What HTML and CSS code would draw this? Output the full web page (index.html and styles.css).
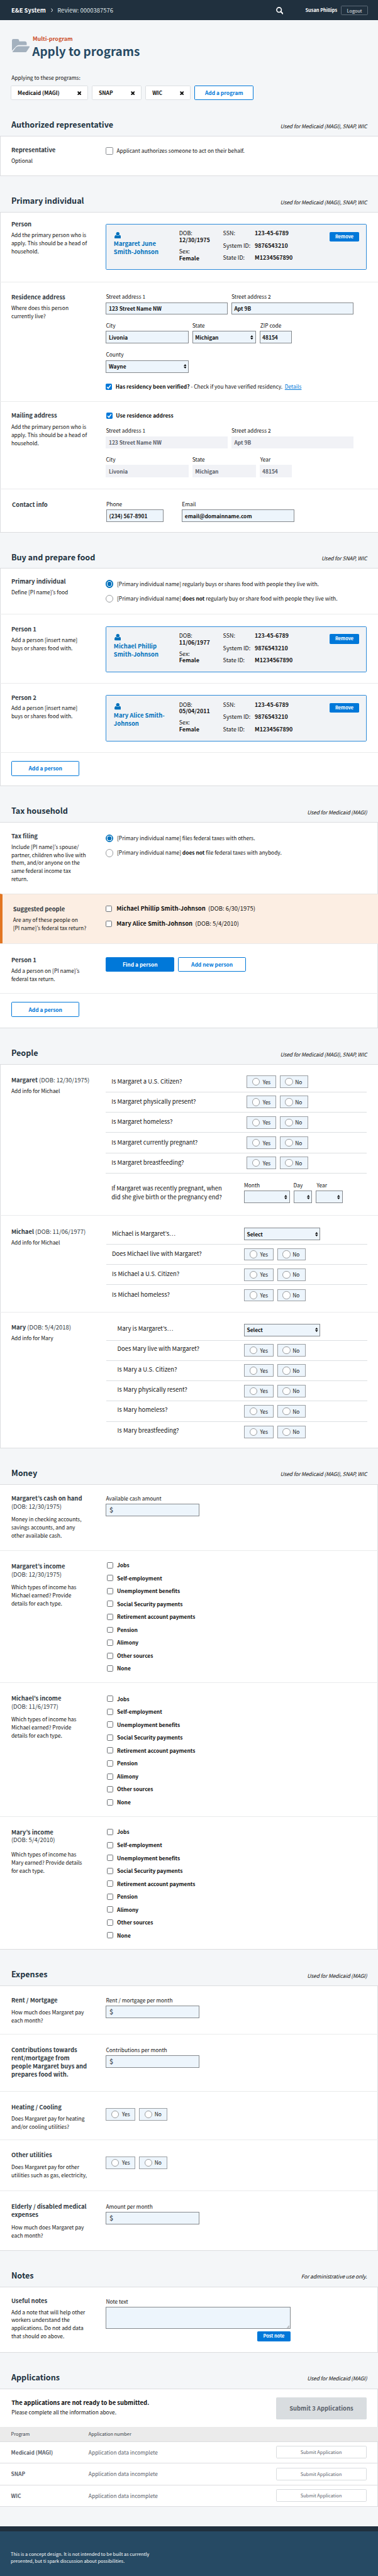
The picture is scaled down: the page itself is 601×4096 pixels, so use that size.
FILE: index.html
```html
<!DOCTYPE html>
<html lang="en">
<head>
<meta charset="utf-8">
<title>Apply to programs</title>
<link rel="stylesheet" href="styles.css">
</head>
<body>
<svg width="0" height="0" class="defs">
  <symbol id="user" viewBox="0 0 18 18"><ellipse cx="9" cy="4.6" rx="4.6" ry="4.6"/><path d="M4 8.2Q9 12.6 14 8.2Q18 9 18 15Q18 18 14.6 18H3.4Q0 18 0 15Q0 9 4 8.2Z"/></symbol>
  <symbol id="sort" viewBox="0 0 8 12"><path d="M4 0L8 5H0ZM4 12L0 7H8Z"/></symbol>
  <symbol id="times" viewBox="0 0 11 11"><path d="M2 0L5.5 3L9 0L11 2L8 5.5L11 9L9 11L5.5 8L2 11L0 9L3 5.5L0 2Z"/></symbol>
  <symbol id="tick" viewBox="0 0 17 17"><path d="M3.5 9L7 12.8L13.5 4.2" fill="none" stroke="#fff" stroke-width="2.6"/></symbol>
</svg>

<header class="topbar">
  <b class="brand">E&amp;E System</b>
  <svg class="chev" viewBox="0 0 6 11"><path d="M1 1L4.6 5.5L1 10" fill="none" stroke="#fff" stroke-width="1.7"/></svg>
  <span class="crumb">Review: 0000387576</span>
  <svg class="search" viewBox="0 0 20 20"><circle cx="8" cy="8" r="6.4" fill="none" stroke="#fff" stroke-width="2.8"/><path d="M12.5 12.5L18.2 18.2" stroke="#fff" stroke-width="3.4" stroke-linecap="round"/></svg>
  <b class="who">Susan Phillips</b>
  <span class="logout">Logout</span>
</header>

<div class="intro">
  <div class="title">
    <svg class="folder" viewBox="0 0 48 37"><path d="M0 32V4Q0 0 4 0H14.500Q19 0 19.500 4V6.500H35Q40 7 40 11.500V16.500H18Q13.500 17 11 20.500Z"/><path d="M17.500 19.500H46.500Q49 20 47.300 22.800L40 33.500Q37.500 37 33.500 37H3Q0.600 36.400 2.300 33.700L10.500 23Q13.500 19.700 17.500 19.500Z"/></svg>
    <div>
      <div class="kicker">Multi-program</div>
      <h1>Apply to programs</h1>
    </div>
  </div>
  <p class="applying">Applying to these programs:</p>
  <div class="chips">
    <div class="chip chip--a"><b>Medicaid (MAGI)</b><svg><use href="#times"/></svg></div>
    <div class="chip chip--b"><b>SNAP</b><svg><use href="#times"/></svg></div>
    <div class="chip chip--c"><b>WIC</b><svg><use href="#times"/></svg></div>
    <div class="btn btn--program">Add a program</div>
  </div>
</div>

<div class="head"><h2>Authorized representative</h2><i>Used for Medicaid (MAGI), SNAP, WIC</i></div>
<section class="panel">
  <div class="row r-rep">
    <div class="side"><h3>Representative</h3><p>Optional</p></div>
    <div class="main"><div class="opt"><span class="box box--lg"></span>Applicant authorizes someone to act on their behalf.</div></div>
  </div>
</section>

<div class="head"><h2>Primary individual</h2><i>Used for Medicaid (MAGI), SNAP, WIC</i></div>
<section class="panel">
  <div class="row r-person">
    <div class="side"><h3>Person</h3><p>Add the primary person who is<br>apply. This should be a head of<br>household.</p></div>
    <div class="main">
      <div class="card">
        <div class="name"><svg><use href="#user"/></svg><b>Margaret June<br>Smith-Johnson</b></div>
        <dl class="dob"><div><dt>DOB:</dt><dd>12/30/1975</dd></div><div><dt>Sex:</dt><dd>Female</dd></div></dl>
        <dl class="ids"><dt>SSN:</dt><dd>123-45-6789</dd><dt>System ID:</dt><dd>9876543210</dd><dt>State ID:</dt><dd>M1234567890</dd></dl>
        <span class="small-btn">Remove</span>
      </div>
    </div>
  </div>
  <div class="row r-res">
    <div class="side"><h3>Residence address</h3><p>Where does this person<br>currently live?</p></div>
    <div class="main">
      <div class="fields">
        <label class="w330">Street address 1<span class="in">123 Street Name NW</span></label>
        <label class="w330">Street address 2<span class="in">Apt 9B</span></label>
      </div>
      <div class="fields">
        <label class="w224">City<span class="in">Livonia</span></label>
        <label class="w172">State<span class="in">Michigan<svg><use href="#sort"/></svg></span></label>
        <label class="w88"><em>ZIP code</em><span class="in">48154</span></label>
      </div>
      <div class="fields fields--county">
        <label class="w224">County<span class="in">Wayne<svg><use href="#sort"/></svg></span></label>
      </div>
      <div class="opt opt--verify"><span class="box box--on"><svg><use href="#tick"/></svg></span><b>Has residency been verified?</b>&nbsp;- Check if you have verified residency. <u>Details</u></div>
    </div>
  </div>
  <div class="row r-mail">
    <div class="side"><h3>Mailing address</h3><p>Add the primary person who is<br>apply. This should be a head of<br>household.</p></div>
    <div class="main">
      <div class="opt opt--use"><span class="box box--on"><svg><use href="#tick"/></svg></span><b>Use residence address</b></div>
      <div class="fields">
        <label class="w330">Street address 1<span class="in in--off">123 Street Name NW</span></label>
        <label class="w330">Street address 2<span class="in in--off">Apt 9B</span></label>
      </div>
      <div class="fields">
        <label class="w224">City<span class="in in--off">Livonia</span></label>
        <label class="w172">State<span class="in in--off">Michigan</span></label>
        <label class="w88"><em>Year</em><span class="in in--off">48154</span></label>
      </div>
    </div>
  </div>
  <div class="row r-contact">
    <div class="side"><h3>Contact info</h3></div>
    <div class="main">
      <div class="fields fields--contact">
        <label class="w155">Phone<span class="in">(234) 567-8901</span></label>
        <label class="w304">Email<span class="in">email@domainname.com</span></label>
      </div>
    </div>
  </div>
</section>

<div class="head"><h2>Buy and prepare food</h2><i>Used for SNAP, WIC</i></div>
<section class="panel">
  <div class="row r-food">
    <div class="side"><h3>Primary individual</h3><p>Define [PI name]’s food</p></div>
    <div class="main">
      <div class="opt"><span class="radio radio--on"></span>[Primary individual name] regularly buys or shares food with people they live with.</div>
      <div class="opt"><span class="radio"></span><span>[Primary individual name] <b>does not</b> regularly buy or share food with people they live with.</span></div>
    </div>
  </div>
  <div class="row r-p1">
    <div class="side"><h3>Person 1</h3><p>Add a person [insert name]<br>buys or shares food with.</p></div>
    <div class="main">
      <div class="card">
        <div class="name"><svg><use href="#user"/></svg><b>Michael Phillip<br>Smith-Johnson</b></div>
        <dl class="dob"><div><dt>DOB:</dt><dd>11/06/1977</dd></div><div><dt>Sex:</dt><dd>Female</dd></div></dl>
        <dl class="ids"><dt>SSN:</dt><dd>123-45-6789</dd><dt>System ID:</dt><dd>9876543210</dd><dt>State ID:</dt><dd>M1234567890</dd></dl>
        <span class="small-btn">Remove</span>
      </div>
    </div>
  </div>
  <div class="row r-p2">
    <div class="side"><h3>Person 2</h3><p>Add a person [insert name]<br>buys or shares food with.</p></div>
    <div class="main">
      <div class="card">
        <div class="name"><svg><use href="#user"/></svg><b>Mary Alice Smith-<br>Johnson</b></div>
        <dl class="dob"><div><dt>DOB:</dt><dd>05/04/2011</dd></div><div><dt>Sex:</dt><dd>Female</dd></div></dl>
        <dl class="ids"><dt>SSN:</dt><dd>123-45-6789</dd><dt>System ID:</dt><dd>9876543210</dd><dt>State ID:</dt><dd>M1234567890</dd></dl>
        <span class="small-btn">Remove</span>
      </div>
    </div>
  </div>
  <div class="row r-add"><div class="btn">Add a person</div></div>
</section>

<div class="head"><h2>Tax household</h2><i>Used for Medicaid (MAGI)</i></div>
<section class="panel panel--right">
  <div class="row r-tax">
    <div class="side"><h3>Tax filing</h3><p>Include [PI name]’s spouse/<br>partner, children who live with<br>them, and/or anyone on the<br>same federal income tax<br>return.</p></div>
    <div class="main">
      <div class="opt"><span class="radio radio--on"></span>[Primary individual name] files federal taxes with others.</div>
      <div class="opt"><span class="radio"></span><span>[Primary individual name] <b>does not</b> file federal taxes with anybody.</span></div>
    </div>
  </div>
  <div class="row r-alert">
    <div class="side"><h3>Suggested people</h3><p>Are any of these people on<br>[PI name]’s federal tax return?</p></div>
    <div class="main">
      <div class="opt"><span class="box"></span><b>Michael Phillip Smith-Johnson</b>&nbsp; (DOB: 6/30/1975)</div>
      <div class="opt"><span class="box"></span><b>Mary Alice Smith-Johnson</b>&nbsp; (DOB: 5/4/2010)</div>
    </div>
  </div>
  <div class="row r-find">
    <div class="side"><h3>Person 1</h3><p>Add a person on [PI name]’s<br>federal tax return.</p></div>
    <div class="main pair"><div class="btn btn--fill">Find a person</div><div class="btn">Add new person</div></div>
  </div>
  <div class="row r-add r-add--tax"><div class="btn">Add a person</div></div>
</section>

<div class="head"><h2>People</h2><i>Used for Medicaid (MAGI), SNAP, WIC</i></div>
<section class="panel">
  <div class="row r-margaret">
    <div class="side"><h3>Margaret <span>(DOB: 12/30/1975)</span></h3><p>Add info for Michael</p></div>
    <div class="main">
      <div class="q"><span>Is Margaret a U.S. Citizen?</span><div class="yn"><span><i></i>Yes</span><span><i></i>No</span></div></div>
      <div class="q"><span>Is Margaret physically present?</span><div class="yn"><span><i></i>Yes</span><span><i></i>No</span></div></div>
      <div class="q"><span>Is Margaret homeless?</span><div class="yn"><span><i></i>Yes</span><span><i></i>No</span></div></div>
      <div class="q"><span>Is Margaret currently pregnant?</span><div class="yn"><span><i></i>Yes</span><span><i></i>No</span></div></div>
      <div class="q"><span>Is Margaret breastfeeding?</span><div class="yn"><span><i></i>Yes</span><span><i></i>No</span></div></div>
      <div class="birth">
        <span>If Margaret was recently pregnant, when<br>did she give birth or the pregnancy end?</span>
        <div class="fields">
          <label class="w124">Month<span class="in"><svg><use href="#sort"/></svg></span></label>
          <label class="w51">Day<span class="in"><svg><use href="#sort"/></svg></span></label>
          <label class="w72"><em>Year</em><span class="in"><svg><use href="#sort"/></svg></span></label>
        </div>
      </div>
    </div>
  </div>
  <div class="row r-michael">
    <div class="side"><h3>Michael <span>(DOB: 11/06/1977)</span></h3><p>Add info for Michael</p></div>
    <div class="main">
      <div class="q"><span>Michael is Margaret’s…</span><span class="in in--select">Select<svg><use href="#sort"/></svg></span></div>
      <div class="q"><span>Does Michael live with Margaret?</span><div class="yn"><span><i></i>Yes</span><span><i></i>No</span></div></div>
      <div class="q"><span>Is Michael a U.S. Citizen?</span><div class="yn"><span><i></i>Yes</span><span><i></i>No</span></div></div>
      <div class="q q--last"><span>Is Michael homeless?</span><div class="yn"><span><i></i>Yes</span><span><i></i>No</span></div></div>
    </div>
  </div>
  <div class="row r-mary">
    <div class="side"><h3>Mary <span>(DOB: 5/4/2018)</span></h3><p>Add info for Mary</p></div>
    <div class="main">
      <div class="q"><span>Mary is Margaret’s…</span><span class="in in--select">Select<svg><use href="#sort"/></svg></span></div>
      <div class="q"><span>Does Mary live with Margaret?</span><div class="yn"><span><i></i>Yes</span><span><i></i>No</span></div></div>
      <div class="q"><span>Is Mary a U.S. Citizen?</span><div class="yn"><span><i></i>Yes</span><span><i></i>No</span></div></div>
      <div class="q"><span>Is Mary physically resent?</span><div class="yn"><span><i></i>Yes</span><span><i></i>No</span></div></div>
      <div class="q"><span>Is Mary homeless?</span><div class="yn"><span><i></i>Yes</span><span><i></i>No</span></div></div>
      <div class="q q--last"><span>Is Mary breastfeeding?</span><div class="yn"><span><i></i>Yes</span><span><i></i>No</span></div></div>
    </div>
  </div>
</section>

<div class="head"><h2>Money</h2><i>Used for Medicaid (MAGI), SNAP, WIC</i></div>
<section class="panel panel--right">
  <div class="row r-cash">
    <div class="side"><h3>Margaret’s cash on hand<br><span>(DOB: 12/30/1975)</span></h3><p>Money in checking accounts,<br>savings accounts, and any<br>other available cash.</p></div>
    <div class="main"><label class="w253">Available cash amount<span class="in in--usd">$</span></label></div>
  </div>
  <div class="row r-inc1">
    <div class="side"><h3>Margaret’s income<br><span>(DOB: 12/30/1975)</span></h3><p>Which types of income has<br>Michael earned? Provide<br>details for each type.</p></div>
    <div class="main list">
      <b><span class="box"></span>Jobs</b><b><span class="box"></span>Self-employment</b><b><span class="box"></span>Unemployment benefits</b><b><span class="box"></span>Social Security payments</b><b><span class="box"></span>Retirement account payments</b><b><span class="box"></span>Pension</b><b><span class="box"></span>Alimony</b><b><span class="box"></span>Other sources</b><b><span class="box"></span>None</b>
    </div>
  </div>
  <div class="row r-inc2">
    <div class="side"><h3>Michael’s income<br><span>(DOB: 11/6/1977)</span></h3><p>Which types of income has<br>Michael earned? Provide<br>details for each type.</p></div>
    <div class="main list">
      <b><span class="box"></span>Jobs</b><b><span class="box"></span>Self-employment</b><b><span class="box"></span>Unemployment benefits</b><b><span class="box"></span>Social Security payments</b><b><span class="box"></span>Retirement account payments</b><b><span class="box"></span>Pension</b><b><span class="box"></span>Alimony</b><b><span class="box"></span>Other sources</b><b><span class="box"></span>None</b>
    </div>
  </div>
  <div class="row r-inc3">
    <div class="side"><h3>Mary’s income<br><span>(DOB: 5/4/2010)</span></h3><p>Which types of income has<br>Mary earned? Provide details<br>for each type.</p></div>
    <div class="main list">
      <b><span class="box"></span>Jobs</b><b><span class="box"></span>Self-employment</b><b><span class="box"></span>Unemployment benefits</b><b><span class="box"></span>Social Security payments</b><b><span class="box"></span>Retirement account payments</b><b><span class="box"></span>Pension</b><b><span class="box"></span>Alimony</b><b><span class="box"></span>Other sources</b><b><span class="box"></span>None</b>
    </div>
  </div>
</section>

<div class="head"><h2>Expenses</h2><i>Used for Medicaid (MAGI)</i></div>
<section class="panel panel--right">
  <div class="row r-rent">
    <div class="side"><h3>Rent / Mortgage</h3><p>How much does Margaret pay<br>each month?</p></div>
    <div class="main"><label class="w253">Rent / mortgage per month<span class="in in--usd">$</span></label></div>
  </div>
  <div class="row r-contrib">
    <div class="side"><h3>Contributions towards<br>rent/mortgage from<br>people Margaret buys and<br>prepares food with.</h3></div>
    <div class="main"><label class="w253">Contributions per month<span class="in in--usd">$</span></label></div>
  </div>
  <div class="row r-heat">
    <div class="side"><h3>Heating / Cooling</h3><p>Does Margaret pay for heating<br>and/or cooling utilities?</p></div>
    <div class="main"><div class="yn"><span><i></i>Yes</span><span><i></i>No</span></div></div>
  </div>
  <div class="row r-util">
    <div class="side"><h3>Other utilities</h3><p>Does Margaret pay for other<br>utilities such as gas, electricity,</p></div>
    <div class="main"><div class="yn"><span><i></i>Yes</span><span><i></i>No</span></div></div>
  </div>
  <div class="row r-elder">
    <div class="side"><h3>Elderly / disabled medical<br>expenses</h3><p>How much does Margaret pay<br>each month?</p></div>
    <div class="main"><label class="w253">Amount per month<span class="in in--usd">$</span></label></div>
  </div>
</section>

<div class="head"><h2>Notes</h2><i>For administrative use only.</i></div>
<section class="panel panel--right">
  <div class="row r-notes">
    <div class="side"><h3>Useful notes</h3><p>Add a note that will help other<br>workers understand the<br>applications. Do not add data<br>that should go above.</p></div>
    <div class="main">
      <div class="note">Note text<div class="area"><svg viewBox="0 0 8 8"><path d="M0 8L8 0M2.500 8L8 2.500M5 8L8 5" stroke="#777" stroke-width="1" fill="none"/></svg></div><span class="small-btn small-btn--post">Post note</span></div>
    </div>
  </div>
</section>

<div class="head"><h2>Applications</h2><i>Used for Medicaid (MAGI)</i></div>
<section class="panel panel--right">
  <div class="submit">
    <div><b>The applications are not ready to be submitted.</b><p>Please complete all the information above.</p></div>
    <span class="submit-btn">Submit 3 Applications</span>
  </div>
  <div class="t t--head"><span>Program</span><span>Application number</span></div>
  <div class="t"><b>Medicaid (MAGI)</b><span>Application data incomplete</span><span class="ghost">Submit Application</span></div>
  <div class="t"><b>SNAP</b><span>Application data incomplete</span><span class="ghost">Submit Application</span></div>
  <div class="t"><b>WIC</b><span>Application data incomplete</span><span class="ghost">Submit Application</span></div>
</section>

<footer>This is a concept design. It is not intended to be built as currently<br>presented, but ti spark discussion about possibilities.</footer>
</body>
</html>
```
FILE: styles.css
```css
/* 1rem = 100 design pixels of a 1024-wide layout */
html { font-size: 58.6914px; background: #f4f6f8; }
* { box-sizing: border-box; }
body { margin: 0; font: .1432rem/.22rem "Noto Sans CJK KR", "Noto Sans", sans-serif; color: #111; overflow-x: hidden; }
h1, h2, h3, p, dl, dd { margin: 0; }
b, h3, dd { font-weight: 700; }
svg { display: block; fill: currentColor; }
.defs { position: absolute; }
em { font-style: normal; padding-left: .02rem; }

.topbar { height: .55rem; background: #20303e; color: #fff; display: flex; align-items: center; padding: 0 .27rem 0 .305rem; font-size: .1611rem; }
.chev { width: .06rem; height: .11rem; margin: .02rem .12rem 0 .135rem; }
.crumb { color: #dfe3e6; }
.search { width: .2rem; height: .2rem; margin: .035rem .6rem 0 auto; }
.who, .logout { font-size: .1253rem; margin-top: .02rem; }
.logout { width: .735rem; height: .26rem; line-height: .24rem; margin-left: .1rem; border: 1px solid #5d6b78; border-radius: .03rem; text-align: center; color: #e6e9eb; }

.intro { height: 2.165rem; padding: .4rem .29rem 0; }
.title { display: flex; }
.folder { width: .48rem; height: .37rem; margin: .1rem .075rem 0 .03rem; color: #a4b1be; }
.kicker { color: #cd4f2b; font-size: .1522rem; font-weight: 700; line-height: .22rem; margin-left: .01rem; }
h1 { color: #264a64; font-size: .3223rem; line-height: .4rem; }
.applying { margin: .42rem 0 .1rem .02rem; }
.chips { display: flex; gap: .1rem; }
.chip { height: .4rem; padding: 0 .17rem; display: flex; align-items: center; justify-content: space-between; background: #fff; border: 1px solid #dcdfe2; border-radius: .03rem; }
.chip svg { width: .11rem; height: .11rem; margin-top: .02rem; }
.chip--a { width: 2.1rem; } .chip--b { width: 1.35rem; } .chip--c { width: 1.23rem; }
.btn { width: 1.85rem; height: .405rem; display: flex; align-items: center; justify-content: center; background: #fff; border: 1px solid #0078d9; border-radius: .03rem; color: #0078d9; font-weight: 700; }
.btn--fill { background: #0078d9; color: #fff; }
.btn--program { width: 1.6rem; height: .4rem; }

.head { height: .97rem; padding: 0 .3rem .157rem .305rem; display: flex; justify-content: space-between; align-items: flex-end; }
h2 { color: #20323f; font-size: .2149rem; line-height: .3rem; }
.head i { letter-spacing: -.0124em; margin-bottom: .007rem; }
.panel { background: #fff; box-shadow: inset 1px 0 #dcdde0, inset 0 1px #dcdde0, inset 0 -1px #dcdde0; }
.panel--right { box-shadow: inset -1px 0 #dcdde0, inset 0 1px #dcdde0, inset 0 -1px #dcdde0; }

.row { display: grid; grid-template-columns: 2.565rem 1fr; padding: 0 .3rem 0 .305rem; }
.row + .row { border-top: 1px solid #eaebec; }
h3 { font-size: .1611rem; line-height: .22rem; color: #323a42; }
h3 span { font-weight: 400; }
.side p { margin-top: .068rem; }

.opt { display: flex; align-items: center; height: .22rem; white-space: pre; }
.opt + .opt { margin-top: .18rem; }
.box { flex: none; width: .17rem; height: .17rem; margin: .02rem .12rem 0 0; border: 1px solid #6e7276; border-radius: .03rem; background: #fff; }
.box--lg { width: .2rem; height: .2rem; margin-right: .09rem; border-color: #8c8f93; }
.box--on { background: #0078d9; border: 0; margin-right: .09rem; }
.box--on svg { width: 100%; height: 100%; }
.radio { flex: none; width: .21rem; height: .21rem; margin: .02rem .1rem 0 -.01rem; border: 1px solid #9a9da0; border-radius: 50%; background: #fff; }
.radio--on { border-color: #0071bc; background: radial-gradient(circle closest-side, #0071bc 0 66%, #fff 72% 84%, #0071bc 92%); }
u { color: #0078d9; margin-left: .03rem; }

.fields { display: flex; gap: .1rem; }
.fields + .fields { margin-top: .18rem; }
.fields + .fields--county { margin-top: .19rem; }
.fields--contact { gap: .5rem; margin-left: .01rem; }
label { display: block; }
.w330 { width: 3.3rem; } .w224 { width: 2.24rem; } .w172 { width: 1.72rem; } .w88 { width: .88rem; }
.w155 { width: 1.55rem; } .w304 { width: 3.04rem; } .w253 { width: 2.53rem; }
.w124 { width: 1.24rem; } .w51 { width: .51rem; } .w72 { width: .72rem; }
.in { display: flex; align-items: center; justify-content: space-between; height: .34rem; margin-top: .04rem; padding: 0 .045rem 0 .06rem; border: 1px solid #85898d; background: #edf5fc; font-weight: 700; line-height: .22rem; }
.in svg { width: .08rem; height: .12rem; margin-left: auto; }
.in--off { background: #f1f2f6; border-color: #f1f2f6; color: #5b616b; }
.in--usd { font-size: .18rem; color: #5b616b; padding-left: .08rem; }
.in--select { width: 2.07rem; margin: 0; }

.card { height: 1.25rem; display: grid; grid-template-columns: 1.77rem 1.19rem 1fr auto; padding: 0 .19rem 0 .195rem; border: 1px solid #2b8ad9; border-radius: .03rem; background: #f1f3f6; }
.name { padding-top: .2rem; color: #0071bc; font-size: .1611rem; }
.name svg { width: .18rem; height: .18rem; margin: 0 0 .035rem .015rem; }
.dob, .ids { font-size: .1522rem; line-height: .183rem; padding-top: .158rem; }
.dob div + div { margin-top: .124rem; }
.ids { display: grid; grid-template-columns: .86rem 1fr; grid-auto-rows: .183rem; row-gap: .15rem; align-content: start; }
.small-btn { width: .81rem; height: .26rem; line-height: .255rem; margin-top: .2rem; border-radius: .03rem; background: #0078d9; color: #fff; font-size: .1253rem; font-weight: 700; text-align: center; }

.r-rep { height: 1.09rem; } .r-rep .side { padding-top: .275rem; } .r-rep .main { padding-top: .283rem; }
.r-person { height: 1.883rem; } .r-person .side { padding-top: .225rem; } .r-person .main { padding-top: .32rem; }
.r-res { height: 3.24rem; } .r-res .side { padding-top: .302rem; } .r-res .main { padding-top: .283rem; }
.opt--verify { margin-top: .27rem; }
.r-mail { height: 2.363rem; } .r-mail .side { padding-top: .263rem; } .r-mail .side p { margin-top: .084rem; } .r-mail .main { padding-top: .26rem; }
.opt--use { margin: 0 0 .193rem .01rem; }
.r-contact { height: 1.194rem; } .r-contact .side { padding: .317rem 0 0 .02rem; } .r-contact .main { padding-top: .298rem; }
.r-food { height: 1.243rem; } .r-food .side { padding-top: .245rem; } .r-food .main { padding-top: .307rem; }
.r-p1 { height: 1.875rem; } .r-p1 .side { padding-top: .282rem; } .r-p1 .main { padding-top: .312rem; }
.r-p2 { height: 1.867rem; } .r-p2 .side { padding-top: .257rem; } .r-p2 .main { padding-top: .307rem; }
.r-add { height: .925rem; padding-top: .22rem; grid-template-columns: 1.85rem; }
.r-add--tax { height: .955rem; }
.r-tax { height: 1.935rem; } .r-tax .side { padding-top: .265rem; } .r-tax .main { padding-top: .317rem; }
.row.r-alert { height: 1.355rem; background: #fceee3; border-top: 1px solid #e8e4e1; border-left: .07rem solid #e27622; padding-left: .285rem; grid-template-columns: 2.515rem 1fr; }
.r-alert .side { padding-top: .3rem; }
.r-alert .main { padding-top: .278rem; font-size: .1611rem; } .r-alert .opt + .opt { margin-top: .192rem; }
.r-find { height: 1.345rem; } .r-find .side { padding-top: .315rem; } .r-find .main { padding-top: .345rem; }
.pair { display: flex; gap: .1rem; }

.q { height: .55rem; display: grid; grid-template-columns: 3.66rem auto; justify-content: start; align-items: center; padding-left: .15rem; border-bottom: 1px solid #dcdfe2; }
.q--last { border: 0; }
.q > span:first-child, .birth > span { font-size: .1611rem; margin-top: -.03rem; }
.yn { display: flex; gap: .1rem; }
.yn span { display: flex; align-items: center; width: .8rem; height: .34rem; padding-left: .13rem; border: 1px solid #9a9ea2; background: #edf5fc; }
.yn span + span { width: .77rem; }
.yn i { width: .21rem; height: .21rem; margin-right: .08rem; border: 1px solid #9a9da0; border-radius: 50%; background: #fff; }
.yn span + span i { margin-right: .06rem; }
.birth { display: grid; grid-template-columns: 3.59rem auto; justify-content: start; padding: .208rem 0 0 .15rem; }
.birth > span { margin-top: .087rem; line-height: .23rem; }
.r-margaret { height: 4.092rem; } .r-margaret .side { padding-top: .315rem; } .r-margaret .main { padding-top: .21rem; }
.r-michael { height: 2.622rem; } .r-michael .side { padding-top: .313rem; } .r-michael .main { padding-top: .225rem; }
.r-mary { height: 3.686rem; } .r-mary .side { padding-top: .284rem; } .r-mary .main { padding-top: .205rem; }
.r-michael .main, .r-mary .main { margin: 0 -.015rem 0 .015rem; }
.r-michael .q { grid-template-columns: 3.575rem auto; }
.r-mary .q { padding-left: .295rem; grid-template-columns: 3.43rem auto; }
.r-mary .q > span:first-child { margin-top: -.08rem; }
.r-margaret .side p, .r-michael .side p { margin-top: .078rem; }

.list { display: flex; flex-direction: column; gap: .13rem; padding-left: .02rem; }
.list b { display: flex; align-items: center; height: .22rem; }
.list .box { margin-right: .11rem; margin-top: .01rem; }
.r-cash { height: 1.802rem; } .r-cash .side { padding-top: .275rem; } .r-cash .main { padding-top: .283rem; }
.r-cash .side p, .r-inc1 .side p, .r-inc2 .side p, .r-elder .side p { margin-top: .13rem; }
.r-inc1 { height: 3.581rem; } .r-inc1 .side { padding-top: .298rem; } .r-inc1 .main { padding-top: .27rem; }
.r-inc2 { height: 3.621rem; } .r-inc2 .side { padding-top: .3rem; } .r-inc2 .main { padding-top: .31rem; }
.r-inc3 { height: 3.616rem; } .r-inc3 .side { padding-top: .3rem; } .r-inc3 .main { padding-top: .299rem; }
.r-inc3 .side p { margin-top: .165rem; }
.r-rent { height: 1.315rem; } .r-rent .side { padding-top: .295rem; } .r-rent .main { padding-top: .29rem; }
.r-rent .side p, .r-heat .side p, .r-util .side p { margin-top: .098rem; }
.r-contrib { height: 1.538rem; } .r-contrib .side { padding-top: .305rem; } .r-contrib .main { padding-top: .298rem; }
.r-heat { height: 1.322rem; } .r-heat .side { padding-top: .307rem; } .r-heat .main { padding-top: .45rem; }
.r-util { height: 1.38rem; } .r-util .side { padding-top: .29rem; } .r-util .main { padding-top: .44rem; }
.r-elder { height: 1.635rem; } .r-elder .side { padding-top: .306rem; } .r-elder .main { padding-top: .305rem; }
.r-notes { height: 1.79rem; } .r-notes .side { padding-top: .272rem; } .r-notes .main { padding-top: .29rem; }
.r-notes .side p { margin-top: .081rem; height: .817rem; overflow: hidden; }
.note { width: 5rem; display: flex; flex-direction: column; }
.area { height: .61rem; margin-top: .03rem; border: 1px solid #85898d; background: #edf5fc; display: flex; align-items: flex-end; justify-content: flex-end; }
.area svg { width: .08rem; height: .08rem; margin: 0 .01rem .01rem 0; }
.small-btn--post { align-self: flex-end; width: .9rem; margin-top: .06rem; height: .27rem; }

.submit { height: 1.045rem; padding: .235rem .305rem 0 .31rem; display: flex; justify-content: space-between; }
.submit b { display: block; font-size: .1611rem; margin-top: .035rem; }
.submit p { margin-top: .035rem; }
.submit-btn { width: 2.46rem; height: .6rem; line-height: .6rem; border-radius: .03rem; background: #d9dde0; color: #5b616b; font-size: .1611rem; font-weight: 700; text-align: center; }
.t { height: .588rem; display: grid; grid-template-columns: 2.1rem 1fr 2.45rem; align-items: center; padding: 0 .315rem 0 .3rem; border-bottom: 1px solid #dcdde0; color: #5b616b; }
.t--head { height: .397rem; background: #ebebeb; color: #323a42; font-size: .1253rem; }
.ghost { height: .34rem; line-height: .32rem; border: 1px solid #d9dcdf; border-radius: .03rem; text-align: center; font-size: .1253rem; }

footer { margin-top: .52rem; height: 1.345rem; padding: .535rem .29rem 0; border-top: .15rem solid #20303e; background: #264a64; color: #fff; font-size: .1253rem; line-height: .18rem; }
```
